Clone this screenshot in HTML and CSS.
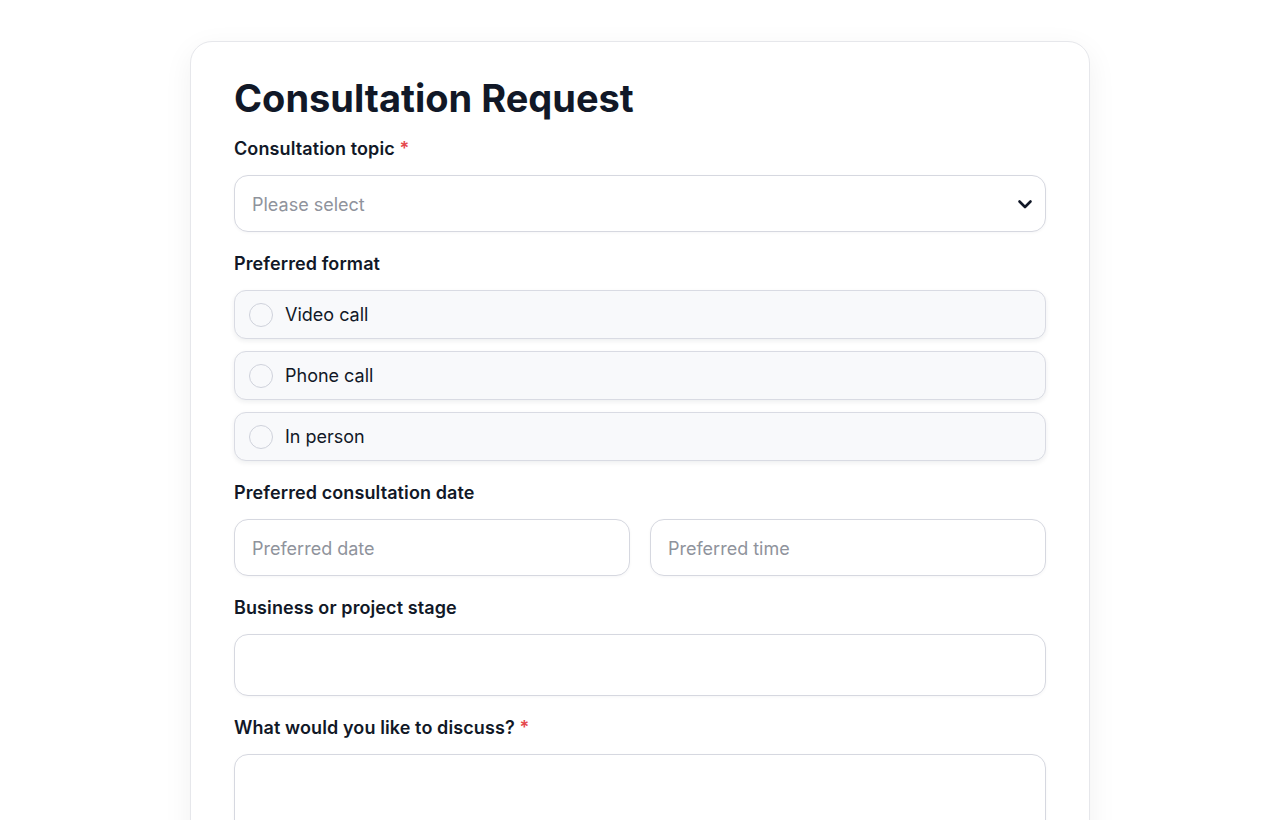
FILE: index.html
```html
<!DOCTYPE html>
<html lang="en">
<head>
  <meta charset="utf-8">
  <title>Consultation Request</title>
  <link rel="stylesheet" href="styles.css">
</head>
<body>
  <div class="form-card">
    <h1 class="form-title">Consultation Request</h1>

    <div class="field">
      <label class="field-label">Consultation topic <span class="req">*</span></label>
      <div class="select-box">
        <span class="placeholder">Please select</span>
        <svg class="chevron" width="18" height="18" viewBox="0 0 18 18">
          <path d="M3.5 6.5 L9 12 L14.5 6.5" fill="none" stroke="#111827" stroke-width="2.6" stroke-linecap="round" stroke-linejoin="round"/>
        </svg>
      </div>
    </div>

    <div class="field">
      <label class="field-label">Preferred format</label>
      <div class="radio-list">
        <div class="radio-option"><span class="radio-dot"></span>Video call</div>
        <div class="radio-option"><span class="radio-dot"></span>Phone call</div>
        <div class="radio-option"><span class="radio-dot"></span>In person</div>
      </div>
    </div>

    <div class="field">
      <label class="field-label">Preferred consultation date</label>
      <div class="two-col">
        <div class="text-input"><span class="placeholder">Preferred date</span></div>
        <div class="text-input"><span class="placeholder">Preferred time</span></div>
      </div>
    </div>

    <div class="field">
      <label class="field-label">Business or project stage</label>
      <div class="text-input tall"></div>
    </div>

    <div class="field">
      <label class="field-label">What would you like to discuss? <span class="req">*</span></label>
      <div class="text-area"></div>
    </div>
  </div>
</body>
</html>
```

FILE: styles.css
```css
html, body {
  margin: 0;
  padding: 0;
  background: #fff;
  font-family: 'Inter', 'Liberation Sans', sans-serif;
  color: #111827;
}
body {
  padding-top: 41px;
}
.form-card {
  box-sizing: border-box;
  width: 900px;
  margin: 0 auto;
  padding: 30px 43px 40px;
  border: 1px solid #e6e7eb;
  border-radius: 22px;
  background: #fff;
  box-shadow: 0 8px 30px rgba(17, 24, 39, 0.06);
}
.form-title {
  margin: 0 0 13px;
  font-size: 38px;
  line-height: 52px;
  font-weight: 700;
  letter-spacing: 0;
  color: #111827;
}
.field {
  margin-bottom: 20px;
}
.field-label {
  display: block;
  font-size: 18px;
  line-height: 24px;
  font-weight: 600;
  margin-bottom: 14px;
  letter-spacing: 0.1px;
}
.req {
  color: #e5484d;
}
.select-box,
.text-input {
  box-sizing: border-box;
  height: 57px;
  display: flex;
  align-items: center;
  padding: 2px 17px 0;
  border: 1px solid #d6d8e0;
  border-radius: 14px;
  background: #fff;
  box-shadow: 0 1px 3px rgba(17, 24, 39, 0.04);
}
.select-box {
  justify-content: space-between;
}
.chevron {
  margin-right: -6px;
  margin-top: -2px;
}
.placeholder {
  font-size: 18px;
  color: #8f939c;
}
.text-input.tall {
  height: 62px;
}
.radio-list {
  display: flex;
  flex-direction: column;
  gap: 12px;
}
.radio-option {
  box-sizing: border-box;
  height: 49px;
  display: flex;
  align-items: center;
  gap: 12px;
  padding: 0 14px;
  border: 1px solid #d9dbe3;
  border-radius: 12px;
  background: #f8f9fb;
  box-shadow: 0 2px 5px rgba(17, 24, 39, 0.07);
  font-size: 18px;
  color: #111827;
}
.radio-dot {
  box-sizing: border-box;
  width: 24px;
  height: 24px;
  border-radius: 50%;
  border: 1px solid #cfd2db;
  background: #f8f9fb;
}
.two-col {
  display: grid;
  grid-template-columns: 1fr 1fr;
  gap: 20px;
}
.text-area {
  box-sizing: border-box;
  height: 140px;
  border: 1px solid #d6d8e0;
  border-radius: 14px;
  background: #fff;
  box-shadow: 0 1px 3px rgba(17, 24, 39, 0.04);
}
```
